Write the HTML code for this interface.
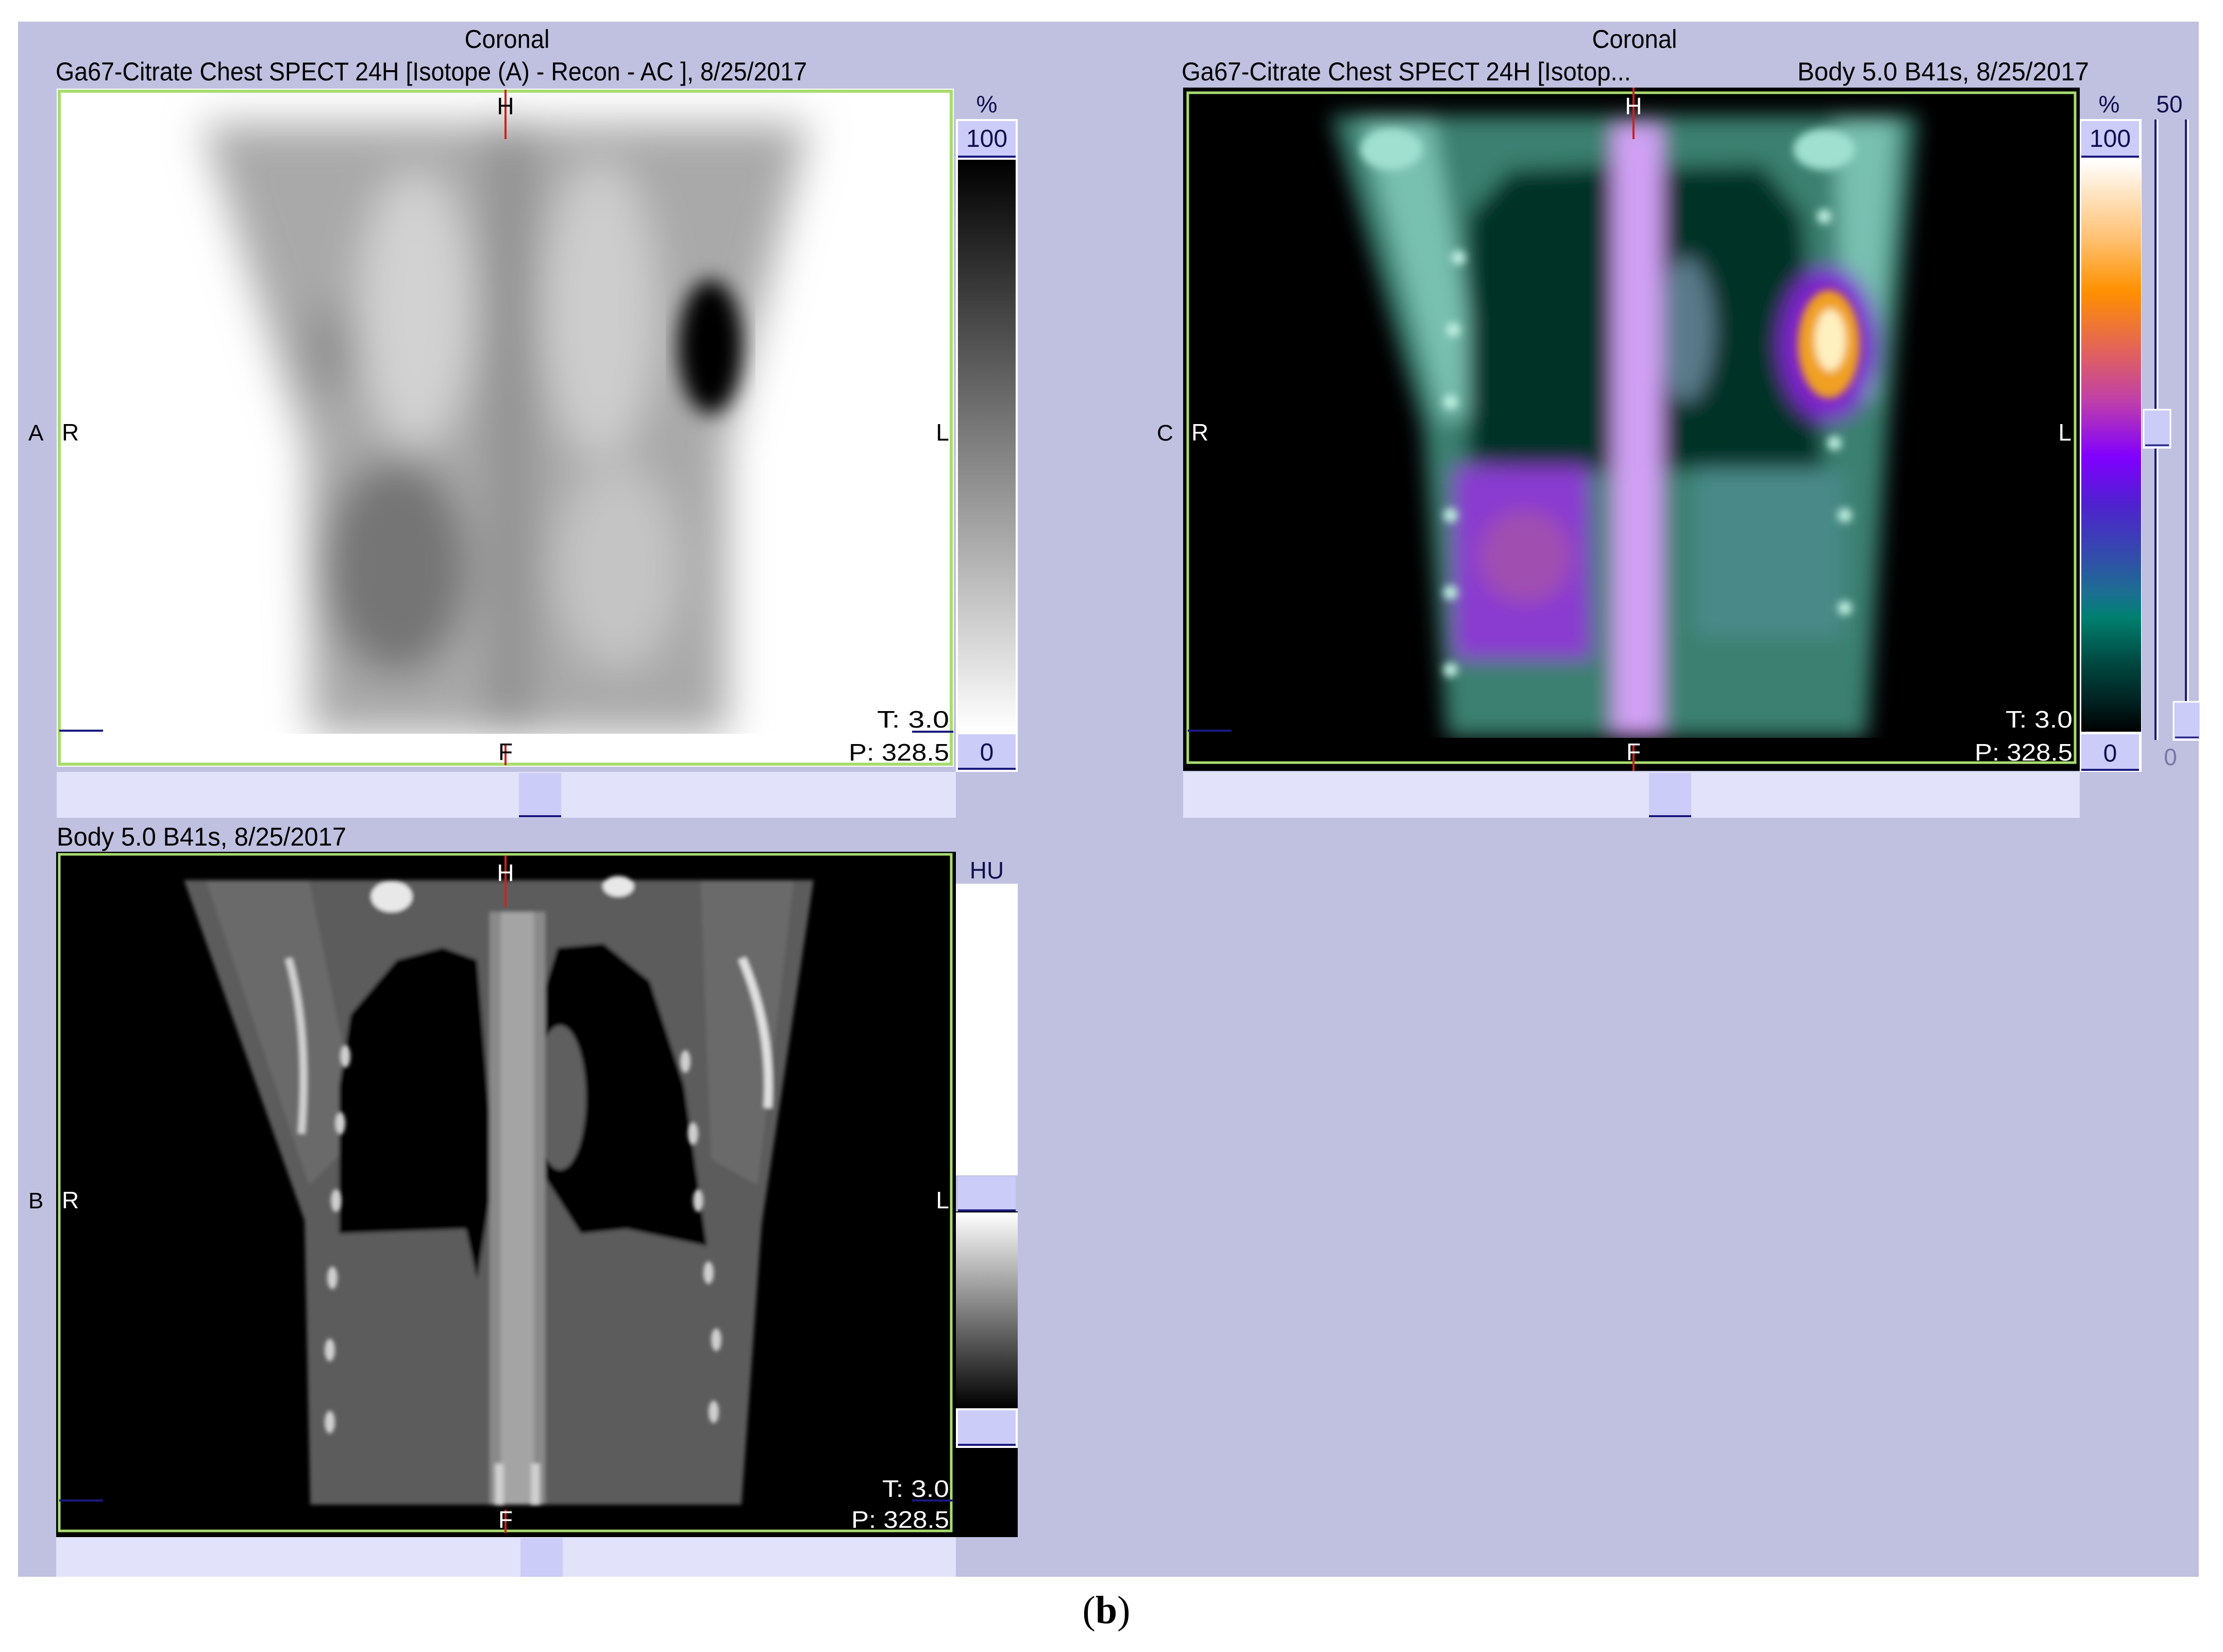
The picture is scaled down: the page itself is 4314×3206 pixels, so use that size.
<!DOCTYPE html>
<html><head><meta charset="utf-8"><style>
html,body{margin:0;padding:0;background:#fff;width:4314px;height:3206px;overflow:hidden}
svg{display:block}
text{font-family:"Liberation Sans",sans-serif}
</style></head><body>
<svg width="4314" height="3206" viewBox="0 0 4314 3206" xmlns="http://www.w3.org/2000/svg">
<defs>
<filter id="b40" x="-20%" y="-20%" width="140%" height="140%"><feGaussianBlur stdDeviation="40"/></filter>
<filter id="b20" x="-20%" y="-20%" width="140%" height="140%"><feGaussianBlur stdDeviation="20"/></filter>
<filter id="b8" x="-20%" y="-20%" width="140%" height="140%"><feGaussianBlur stdDeviation="8"/></filter>
<filter id="b4" x="-20%" y="-20%" width="140%" height="140%"><feGaussianBlur stdDeviation="4"/></filter>
<clipPath id="c1"><rect x="117" y="180" width="1726" height="1300"/></clipPath>
<clipPath id="c2"><rect x="2305" y="180" width="1726" height="1298"/></clipPath>
<clipPath id="c3"><rect x="117" y="1660" width="1726" height="1308"/></clipPath>
<linearGradient id="g1" x1="0" y1="0" x2="0" y2="1"><stop offset="0" stop-color="#000"/><stop offset="1" stop-color="#fff"/></linearGradient>
<linearGradient id="g2" x1="0" y1="0" x2="0" y2="1">
<stop offset="0" stop-color="#fff"/><stop offset="0.14" stop-color="#ffc070"/><stop offset="0.23" stop-color="#ff9000"/><stop offset="0.34" stop-color="#e06060"/><stop offset="0.42" stop-color="#c040a8"/><stop offset="0.52" stop-color="#8000ff"/><stop offset="0.6" stop-color="#5020d0"/><stop offset="0.7" stop-color="#3050a8"/><stop offset="0.76" stop-color="#1a7090"/><stop offset="0.8" stop-color="#008070"/><stop offset="0.88" stop-color="#004840"/><stop offset="0.95" stop-color="#002020"/><stop offset="1" stop-color="#000"/></linearGradient>
<linearGradient id="g3" x1="0" y1="0" x2="0" y2="1"><stop offset="0" stop-color="#fff"/><stop offset="1" stop-color="#000"/></linearGradient>
</defs>

<rect x="0" y="0" width="4314" height="3206" fill="#fff"/>
<rect x="35" y="42" width="4232" height="3018" fill="#c0c0e0"/>

<!-- ===== Panel A ===== -->
<text x="984" y="93" font-size="50" text-anchor="middle" textLength="165" lengthAdjust="spacingAndGlyphs">Coronal</text>
<text x="108" y="156" font-size="50" textLength="1458" lengthAdjust="spacingAndGlyphs">Ga67-Citrate Chest SPECT 24H [Isotope  (A) - Recon - AC ], 8/25/2017</text>
<rect x="110" y="172" width="1741" height="1316" fill="#fff"/>
<g clip-path="url(#c1)">
 <g filter="url(#b40)">
  <polygon points="392,240 1570,240 1413,853 1413,1424 605,1424 594,869" fill="#a9a9a9"/>
  <ellipse cx="807" cy="600" rx="110" ry="270" fill="#d2d2d2"/>
  <ellipse cx="1165" cy="600" rx="110" ry="290" fill="#cdcdcd"/>
  <rect x="950" y="240" width="80" height="1180" fill="#8e8e8e"/>
  <ellipse cx="770" cy="1100" rx="140" ry="210" fill="#747474"/>
  <ellipse cx="1200" cy="1100" rx="120" ry="200" fill="#c4c4c4"/>
  <ellipse cx="640" cy="680" rx="50" ry="90" fill="#909090"/>
 </g>
 <ellipse cx="1379" cy="673" rx="62" ry="130" fill="#000" filter="url(#b20)"/>
 <rect x="117" y="1424" width="1726" height="60" fill="#fff"/>
</g>
<rect x="115" y="177" width="1731" height="1306" fill="none" stroke="#a8dc70" stroke-width="6"/>
<line x1="981" y1="174" x2="981" y2="270" stroke="#d02020" stroke-width="4"/>
<line x1="981" y1="1445" x2="981" y2="1485" stroke="#d02020" stroke-width="4"/>
<text x="981" y="222" font-size="46" text-anchor="middle" fill="#000">H</text>
<text x="981" y="1475" font-size="46" text-anchor="middle" fill="#000">F</text>
<text x="120" y="855" font-size="46" fill="#000">R</text>
<text x="1842" y="855" font-size="46" text-anchor="end" fill="#000">L</text>
<text x="55" y="855" font-size="44" fill="#000">A</text>
<line x1="115" y1="1418" x2="200" y2="1418" stroke="#1a1a80" stroke-width="4"/>
<text x="1842" y="1412" font-size="46" text-anchor="end" textLength="140" lengthAdjust="spacingAndGlyphs">T: 3.0</text>
<line x1="1770" y1="1420" x2="1850" y2="1420" stroke="#1a1a80" stroke-width="4"/>
<text x="1842" y="1476" font-size="46" text-anchor="end" textLength="195" lengthAdjust="spacingAndGlyphs">P: 328.5</text>
<text x="1915" y="218" font-size="46" text-anchor="middle" fill="#101050">%</text>
<rect x="1855" y="231" width="120" height="1267" fill="#fff"/>
<rect x="1859" y="235" width="112" height="68" fill="#ccccf8"/>
<line x1="1859" y1="304" x2="1971" y2="304" stroke="#1a1a80" stroke-width="4"/>
<text x="1915" y="285" font-size="48" text-anchor="middle" fill="#101050">100</text>
<rect x="1859" y="310" width="112" height="1108" fill="url(#g1)"/>
<rect x="1859" y="1425" width="112" height="66" fill="#ccccf8"/>
<line x1="1859" y1="1492" x2="1971" y2="1492" stroke="#1a1a80" stroke-width="4"/>
<text x="1915" y="1476" font-size="48" text-anchor="middle" fill="#101050">0</text>
<rect x="110" y="1498" width="1745" height="89" fill="#e2e2fa"/>
<rect x="1007" y="1500" width="82" height="85" fill="#ccccf8"/>
<line x1="1007" y1="1584" x2="1089" y2="1584" stroke="#1a1a80" stroke-width="4"/>

<!-- ===== Panel C (fused) ===== -->
<text x="3172" y="93" font-size="50" text-anchor="middle" textLength="165" lengthAdjust="spacingAndGlyphs">Coronal</text>
<text x="2293" y="156" font-size="50" textLength="872" lengthAdjust="spacingAndGlyphs">Ga67-Citrate Chest SPECT 24H [Isotop...</text>
<text x="4054" y="156" font-size="50" text-anchor="end" textLength="566" lengthAdjust="spacingAndGlyphs">Body  5.0  B41s, 8/25/2017</text>
<rect x="2296" y="170" width="1740" height="1326" fill="#000"/>
<g clip-path="url(#c2)">
 <g filter="url(#b20)">
  <polygon points="2584,224 3721,224 3663,832 3623,1430 2808,1430 2762,832" fill="#3a8070"/>
  <polygon points="2640,230 2780,230 2880,800 2800,820" fill="#78c0b0"/>
  <polygon points="3560,230 3680,230 3640,780 3580,760" fill="#78c0b0"/>
  <polygon points="2848,420 2930,330 3135,320 3135,918 2848,900" fill="#033228"/>
  <polygon points="3221,325 3420,320 3500,420 3543,926 3221,910" fill="#033228"/>
  <ellipse cx="3270" cy="640" rx="55" ry="140" fill="#5a7a8a"/>
  <polygon points="2820,905 3084,905 3090,1280 2820,1280" fill="#8a3ad0"/>
  <ellipse cx="2960" cy="1080" rx="90" ry="90" fill="#a050b0"/>
  <polygon points="3290,910 3577,910 3577,1236 3290,1236" fill="#4a8a88"/>
  <rect x="3130" y="240" width="95" height="1190" fill="#d0a0f4"/>
  <ellipse cx="3549" cy="668" rx="95" ry="150" fill="#8020d0"/>
 </g>
 <g filter="url(#b8)">
  <ellipse cx="3549" cy="668" rx="60" ry="105" fill="#f0a020"/>
  <ellipse cx="3552" cy="660" rx="30" ry="60" fill="#fff0c0"/>
  <circle cx="2830" cy="500" r="14" fill="#c0f0e0"/><circle cx="2820" cy="640" r="14" fill="#c0f0e0"/>
  <circle cx="2815" cy="780" r="14" fill="#c0f0e0"/><circle cx="2815" cy="1000" r="14" fill="#c0f0e0"/>
  <circle cx="2815" cy="1150" r="14" fill="#c0f0e0"/><circle cx="2815" cy="1300" r="14" fill="#c0f0e0"/>
  <circle cx="3540" cy="420" r="14" fill="#c0f0e0"/><circle cx="3560" cy="860" r="14" fill="#c0f0e0"/>
  <circle cx="3580" cy="1000" r="14" fill="#c0f0e0"/><circle cx="3580" cy="1180" r="14" fill="#c0f0e0"/>
  <ellipse cx="2700" cy="290" rx="60" ry="40" fill="#a0e0d0"/><ellipse cx="3540" cy="290" rx="60" ry="40" fill="#a0e0d0"/>
 </g>
 <rect x="2305" y="1432" width="1726" height="50" fill="#000"/>
</g>
<rect x="2305" y="180" width="1722" height="1300" fill="none" stroke="#a8dc70" stroke-width="5"/>
<rect x="4036" y="170" width="60" height="1330" fill="#c0c0e0"/>
<line x1="3170" y1="170" x2="3170" y2="270" stroke="#d02020" stroke-width="4"/>
<line x1="3170" y1="1445" x2="3170" y2="1496" stroke="#d02020" stroke-width="4"/>
<text x="3170" y="222" font-size="46" text-anchor="middle" fill="#fff">H</text>
<text x="3170" y="1475" font-size="46" text-anchor="middle" fill="#fff">F</text>
<text x="2312" y="855" font-size="46" fill="#fff">R</text>
<text x="4020" y="855" font-size="46" text-anchor="end" fill="#fff">L</text>
<text x="2245" y="855" font-size="44" fill="#000">C</text>
<line x1="2305" y1="1418" x2="2390" y2="1418" stroke="#1a1a80" stroke-width="4"/>
<text x="4022" y="1412" font-size="46" text-anchor="end" fill="#fff" textLength="130" lengthAdjust="spacingAndGlyphs">T: 3.0</text>
<text x="4022" y="1476" font-size="46" text-anchor="end" fill="#fff" textLength="190" lengthAdjust="spacingAndGlyphs">P: 328.5</text>
<text x="4093" y="218" font-size="46" text-anchor="middle" fill="#101050">%</text>
<text x="4210" y="218" font-size="46" text-anchor="middle" fill="#101050">50</text>
<rect x="4036" y="231" width="120" height="1267" fill="#fff"/>
<rect x="4039" y="235" width="112" height="68" fill="#ccccf8"/>
<line x1="4039" y1="304" x2="4151" y2="304" stroke="#1a1a80" stroke-width="4"/>
<text x="4095" y="285" font-size="48" text-anchor="middle" fill="#101050">100</text>
<rect x="4039" y="310" width="116" height="1110" fill="url(#g2)"/>
<rect x="4039" y="1425" width="112" height="68" fill="#ccccf8"/>
<line x1="4039" y1="1494" x2="4151" y2="1494" stroke="#1a1a80" stroke-width="4"/>
<text x="4095" y="1478" font-size="48" text-anchor="middle" fill="#101050">0</text>
<line x1="4183" y1="232" x2="4183" y2="1436" stroke="#1a1a80" stroke-width="4"/>
<line x1="4187" y1="232" x2="4187" y2="1436" stroke="#fff" stroke-width="3"/>
<line x1="4242" y1="232" x2="4242" y2="1362" stroke="#1a1a80" stroke-width="4"/>
<line x1="4246" y1="232" x2="4246" y2="1362" stroke="#fff" stroke-width="3"/>
<rect x="4160" y="795" width="52" height="74" fill="#ccccf8" stroke="#fff" stroke-width="3"/>
<line x1="4163" y1="864" x2="4209" y2="864" stroke="#1a1a80" stroke-width="3"/>
<rect x="4218" y="1362" width="52" height="74" fill="#ccccf8" stroke="#fff" stroke-width="3"/>
<line x1="4221" y1="1431" x2="4267" y2="1431" stroke="#1a1a80" stroke-width="3"/>
<text x="4212" y="1485" font-size="46" text-anchor="middle" fill="#7878a8">0</text>
<rect x="2296" y="1498" width="1740" height="89" fill="#e2e2fa"/>
<rect x="3200" y="1500" width="82" height="85" fill="#ccccf8"/>
<line x1="3200" y1="1584" x2="3282" y2="1584" stroke="#1a1a80" stroke-width="4"/>

<!-- ===== Panel B (CT) ===== -->
<text x="110" y="1641" font-size="50" textLength="562" lengthAdjust="spacingAndGlyphs">Body  5.0  B41s, 8/25/2017</text>
<rect x="109" y="1653" width="1866" height="1330" fill="#000"/>
<g clip-path="url(#c3)">
 <g filter="url(#b4)">
  <polygon points="357,1708 1579,1708 1478,2377 1439,2920 602,2920 591,2369" fill="#5c5c5c"/>
  <polygon points="400,1710 600,1710 700,2200 600,2300" fill="#6a6a6a"/>
  <polygon points="1360,1710 1540,1710 1470,2300 1380,2250" fill="#6a6a6a"/>
  <polygon points="680,1969 770,1863 859,1839 926,1863 959,2271 926,2483 904,2385 658,2394 658,2108" fill="#000"/>
  <polygon points="1049,1945 1082,1839 1171,1831 1261,1904 1328,2108 1372,2418 1216,2385 1127,2394 1049,2271" fill="#000"/>
  <ellipse cx="1087" cy="2130" rx="50" ry="140" fill="#5e5e5e"/>
  <rect x="950" y="1770" width="108" height="1150" fill="#8a8a8a"/>
  <rect x="972" y="1770" width="64" height="1150" fill="#a4a4a4"/>
  <path d="M560,1860 Q600,2000 585,2200" stroke="#d0d0d0" stroke-width="14" fill="none"/>
  <path d="M1440,1860 Q1500,2000 1490,2150" stroke="#e0e0e0" stroke-width="16" fill="none"/>
  <ellipse cx="760" cy="1740" rx="40" ry="30" fill="#e8e8e8"/>
  <ellipse cx="1200" cy="1720" rx="30" ry="20" fill="#e8e8e8"/>
 </g>
 <g fill="#cfcfcf" filter="url(#b4)">
  <ellipse cx="670" cy="2050" rx="10" ry="22"/><ellipse cx="660" cy="2180" rx="10" ry="22"/><ellipse cx="652" cy="2330" rx="10" ry="22"/>
  <ellipse cx="645" cy="2480" rx="10" ry="22"/><ellipse cx="640" cy="2620" rx="10" ry="22"/><ellipse cx="640" cy="2760" rx="10" ry="22"/>
  <ellipse cx="1330" cy="2060" rx="10" ry="22"/><ellipse cx="1345" cy="2200" rx="10" ry="22"/><ellipse cx="1355" cy="2330" rx="10" ry="22"/>
  <ellipse cx="1375" cy="2470" rx="10" ry="22"/><ellipse cx="1390" cy="2600" rx="10" ry="22"/><ellipse cx="1385" cy="2740" rx="10" ry="22"/>
  <rect x="960" y="2840" width="18" height="80"/><rect x="1030" y="2840" width="18" height="80"/>
 </g>
</g>
<rect x="115" y="1658" width="1731" height="1313" fill="none" stroke="#a8dc70" stroke-width="5"/>
<line x1="981" y1="1660" x2="981" y2="1760" stroke="#d02020" stroke-width="4"/>
<line x1="981" y1="2930" x2="981" y2="2975" stroke="#d02020" stroke-width="4"/>
<text x="981" y="1710" font-size="46" text-anchor="middle" fill="#fff">H</text>
<text x="981" y="2965" font-size="46" text-anchor="middle" fill="#fff">F</text>
<text x="120" y="2345" font-size="46" fill="#fff">R</text>
<text x="1842" y="2345" font-size="46" text-anchor="end" fill="#fff">L</text>
<text x="55" y="2345" font-size="44" fill="#000">B</text>
<line x1="115" y1="2912" x2="200" y2="2912" stroke="#1a1a80" stroke-width="4"/>
<line x1="1770" y1="2912" x2="1850" y2="2912" stroke="#1a1a80" stroke-width="4"/>
<text x="1842" y="2905" font-size="46" text-anchor="end" fill="#fff" textLength="130" lengthAdjust="spacingAndGlyphs">T: 3.0</text>
<text x="1842" y="2965" font-size="46" text-anchor="end" fill="#fff" textLength="190" lengthAdjust="spacingAndGlyphs">P: 328.5</text>
<rect x="1855" y="1653" width="120" height="62" fill="#c0c0e0"/>
<text x="1915" y="1705" font-size="46" text-anchor="middle" fill="#101050">HU</text>
<rect x="1855" y="1715" width="120" height="566" fill="#fff"/>
<rect x="1855" y="2281" width="120" height="70" fill="#c0c0e0"/>
<rect x="1859" y="2283" width="112" height="66" fill="#ccccf8"/>
<line x1="1859" y1="2349" x2="1971" y2="2349" stroke="#1a1a80" stroke-width="4"/>
<rect x="1855" y="2353" width="120" height="380" fill="url(#g3)"/>
<rect x="1855" y="2733" width="120" height="77" fill="#fff"/>
<rect x="1859" y="2737" width="112" height="68" fill="#ccccf8"/>
<line x1="1859" y1="2804" x2="1971" y2="2804" stroke="#1a1a80" stroke-width="4"/>
<rect x="109" y="2983" width="1746" height="77" fill="#e2e2fa"/>
<rect x="1010" y="2985" width="82" height="75" fill="#ccccf8"/>

<text x="2147" y="3150" font-size="76" text-anchor="middle" style="font-family:'Liberation Serif',serif">(<tspan font-weight="bold">b</tspan>)</text>
</svg>
</body></html>
